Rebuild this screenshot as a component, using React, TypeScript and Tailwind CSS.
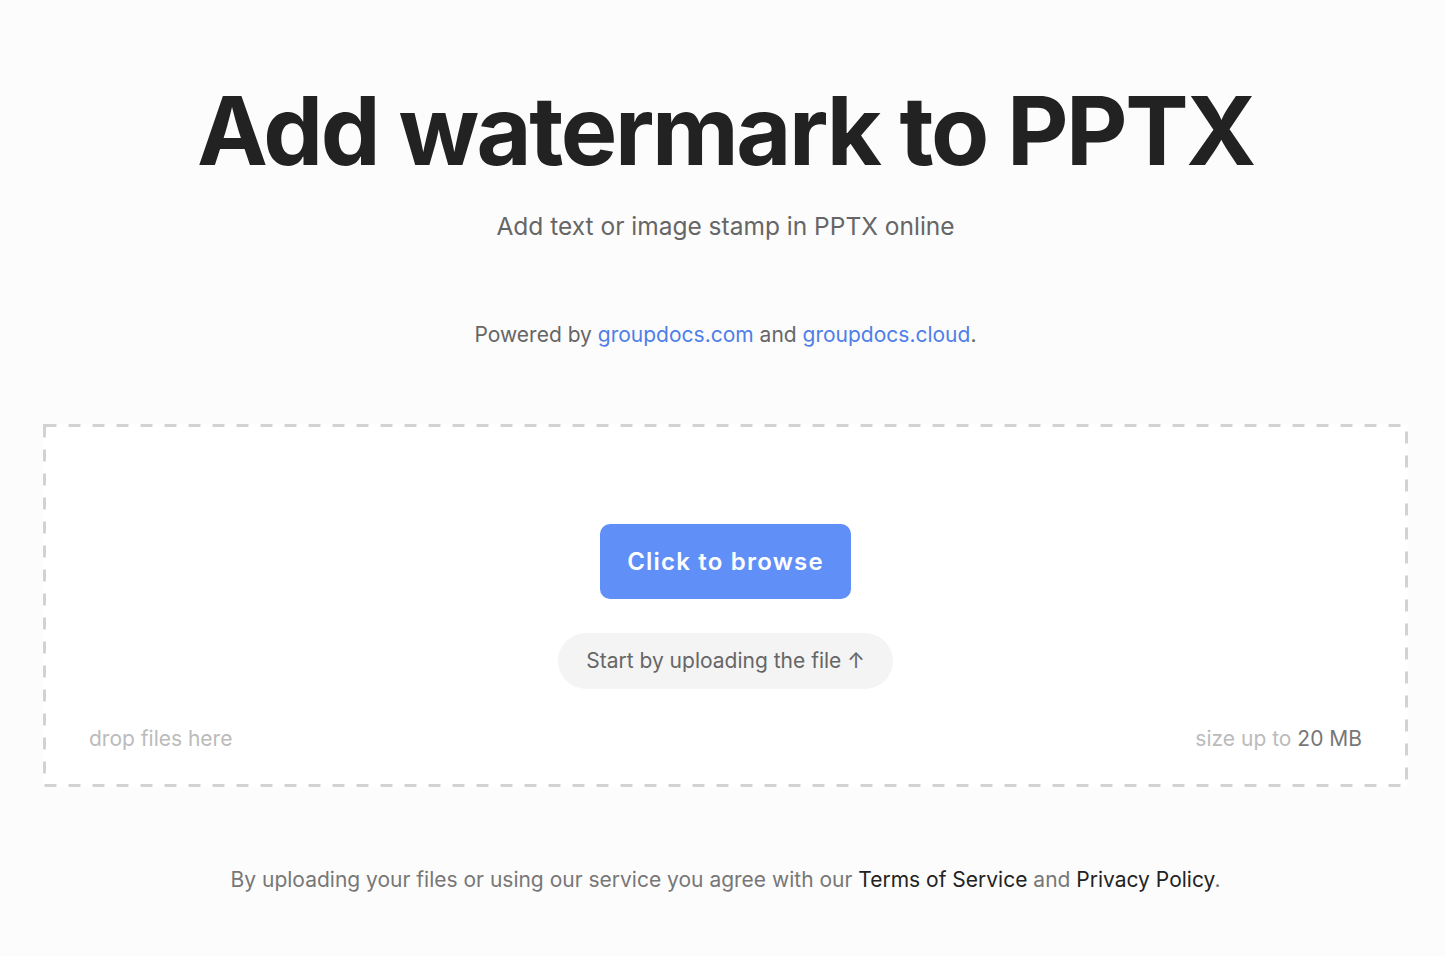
import React from "react";

export default function App() {
  return (
    <div
      className="min-h-[956px] w-full bg-[#fcfcfc] flex flex-col items-center pl-[5px]"
      style={{ fontFamily: "Inter, 'Noto Sans', sans-serif" }}
    >
      <h1 className="mt-[76px] text-[95px] leading-[110px] font-bold text-[#222] tracking-[-2.4px]">
        Add watermark to PPTX
      </h1>
      <p className="mt-[24px] text-[24.5px] leading-[32px] text-[#666]">
        Add text or image stamp in PPTX online
      </p>
      <p className="mt-[79px] text-[21px] leading-[28px] text-[#666]">
        Powered by <span className="text-[#4f7ee8]">groupdocs.com</span> and{" "}
        <span className="text-[#4f7ee8]">groupdocs.cloud</span>.
      </p>
      <div className="relative mt-[75px] w-[1365px] h-[363px] bg-white flex flex-col items-center">
        <svg
          className="absolute inset-0 pointer-events-none"
          width="1365"
          height="363"
        >
          <rect
            x="1.5"
            y="1.5"
            width="1362"
            height="360"
            fill="none"
            stroke="#d2d2d2"
            strokeWidth="3"
            strokeDasharray="12 12"
          />
        </svg>
        <button className="mt-[100px] w-[251px] h-[75px] rounded-[10px] bg-[#608ff8] text-white text-[24px] font-semibold tracking-[1.2px]">
          Click to browse
        </button>
        <div className="mt-[34px] w-[335px] h-[56px] rounded-full bg-[#f4f4f4] flex items-center justify-center text-[21px] text-[#666]">
          Start by uploading the file ↑
        </div>
        <div className="mt-[36px] w-full flex justify-between px-[46px] text-[21px] leading-[28px]">
          <span className="text-[#bbb]">drop files here</span>
          <span className="text-[#bbb]">
            size up to <span className="text-[#777]">20 MB</span>
          </span>
        </div>
      </div>
      <p className="mt-[79px] text-[21px] leading-[28px] text-[#777]">
        By uploading your files or using our service you agree with our{" "}
        <span className="text-[#222]">Terms of Service</span> and{" "}
        <span className="text-[#222]">Privacy Policy</span>.
      </p>
    </div>
  );
}
